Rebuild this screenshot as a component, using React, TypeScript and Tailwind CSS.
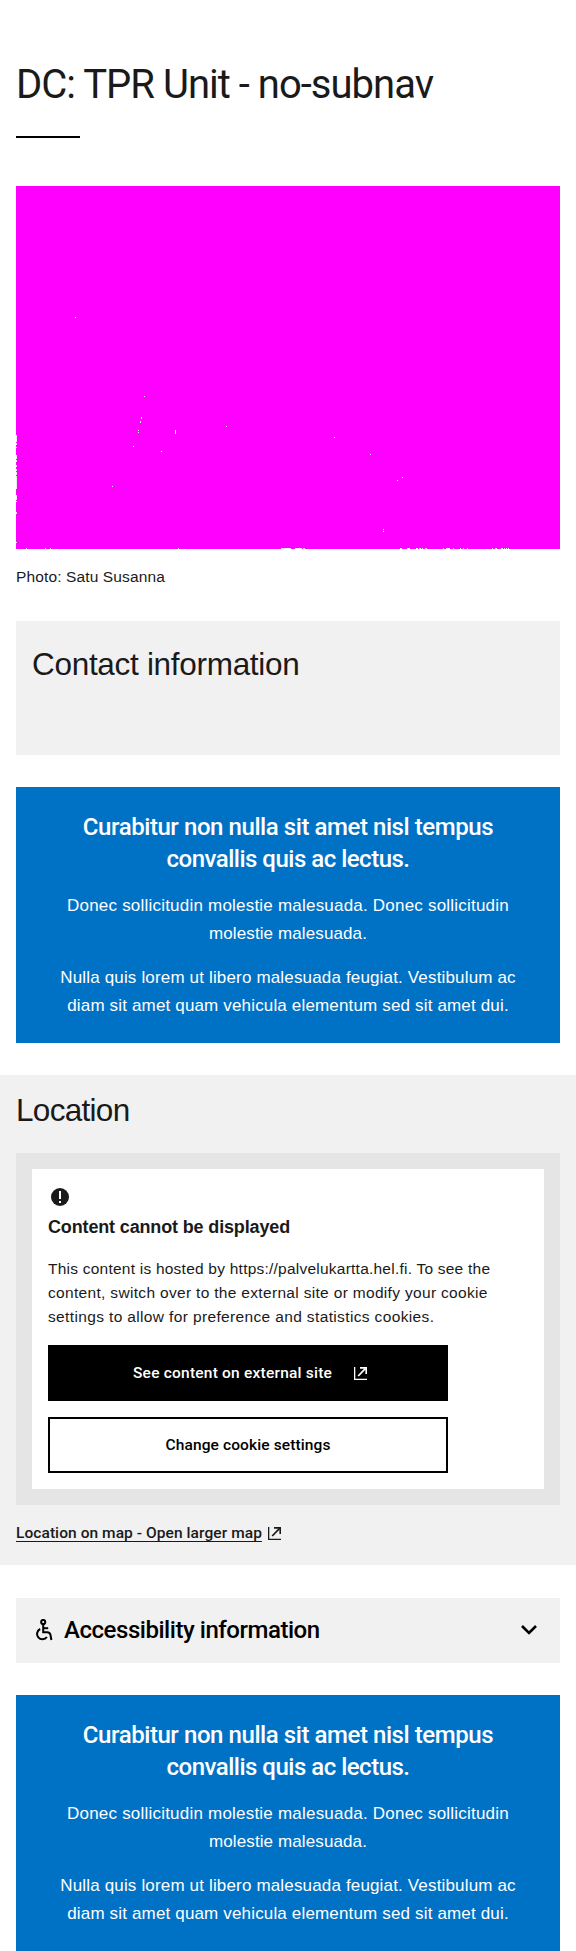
import React from "react";

const specks: [number, number, number, number][] = [
  [59, 131, 1, 1], [128, 210, 1, 1], [125, 231, 1, 2], [124, 235, 1, 2], [122, 244, 1, 1], [122, 246, 1, 1],
  [159, 244, 1, 4], [210, 240, 1, 1], [117, 260, 1, 1], [145, 265, 1, 1], [96, 300, 1, 1],
  [318, 251, 1, 1], [354, 268, 1, 1], [386, 291, 1, 1], [381, 294, 1, 1], [367, 343, 1, 1], [367, 345, 1, 1],
  [0, 249, 1, 7], [0, 257, 1, 2], [0, 261, 1, 1], [0, 269, 1, 4], [0, 274, 1, 2], [0, 279, 1, 2], [0, 283, 1, 2],
  [0, 286, 1, 3], [0, 290, 1, 13], [0, 309, 1, 5], [0, 315, 1, 1], [0, 326, 1, 2], [0, 356, 1, 1],
  [10, 362, 1, 1], [29, 362, 1, 1], [34, 362, 1, 1], [162, 362, 1, 1], [265, 362, 10, 1], [279, 362, 7, 1],
  [287, 362, 2, 1], [384, 362, 2, 1], [391, 362, 3, 1], [400, 362, 2, 1], [403, 362, 2, 1], [406, 362, 1, 1],
  [409, 362, 2, 1], [427, 362, 1, 1], [430, 362, 4, 1], [437, 362, 1, 1], [444, 362, 1, 1], [447, 362, 1, 1],
  [451, 362, 1, 1], [476, 362, 1, 1], [479, 362, 2, 1], [485, 362, 2, 1], [488, 362, 1, 1], [490, 362, 1, 1],
  [492, 362, 1, 1],
];

function Photo() {
  return (
    <svg className="mt-12 block h-[363px] w-[544px] bg-[#ff00ff]" viewBox="0 0 544 363" shapeRendering="crispEdges">
      {specks.map(([x, y, w, h]) => (
        <rect key={`${x}-${y}`} x={x} y={y} width={w} height={h} fill="#ececec" />
      ))}
    </svg>
  );
}

function ExternalIcon({ className }: { className: string }) {
  return (
    <svg className={className} viewBox="0 0 13 13" fill="none" stroke="currentColor">
      <path d="M.65 0V12.3H13" strokeWidth="1.3" />
      <path d="M4.2 9L11.6 1.4" strokeWidth="1.7" />
      <path d="M6 .9H12.2V7" strokeWidth="1.6" />
    </svg>
  );
}

function AlertIcon() {
  return (
    <svg className="h-6 w-6" viewBox="0 0 24 24">
      <circle cx="12" cy="12" r="9" fill="#1a1a1a" />
      <path d="M11 6h2v8h-2zM11 16h2v2h-2z" fill="white" />
    </svg>
  );
}

function AccessibilityIcon() {
  return (
    <svg className="h-[22px] w-[17px]" viewBox="0 0 17 22" fill="none" stroke="black" strokeWidth="2">
      <circle cx="7.2" cy="3" r="2.1" />
      <path d="M7.2 5.2V13.2H11.2Q14 13.2 14.5 16L15.4 21" />
      <path d="M7.2 9.2H12.2" />
      <path d="M4.2 10A5.4 5.4 0 1 0 10.9 18" />
    </svg>
  );
}

function Banner() {
  return (
    <section className="mx-4 mt-8 h-64 bg-[#0072c6] pt-6 text-center font-['Liberation_Sans',sans-serif] text-[17px] leading-7 whitespace-nowrap text-white">
      <h3 className="font-['Roboto',sans-serif] text-2xl leading-8 font-medium">
        <span className="block tracking-[-0.43px]">Curabitur non nulla sit amet nisl tempus</span>
        <span className="block tracking-[-0.5px]">convallis quis ac lectus.</span>
      </h3>
      <p className="mt-[17px]">
        <span className="block tracking-[0.21px]">Donec sollicitudin molestie malesuada. Donec sollicitudin</span>
        <span className="block tracking-[0.11px]">molestie malesuada.</span>
      </p>
      <p className="mt-4">
        <span className="block tracking-[0.16px]">Nulla quis lorem ut libero malesuada feugiat. Vestibulum ac</span>
        <span className="block tracking-[0.16px]">diam sit amet quam vehicula elementum sed sit amet dui.</span>
      </p>
    </section>
  );
}

export default function App() {
  return (
    <main className="w-[576px] bg-white font-['Liberation_Sans',sans-serif] text-[15.5px] text-[#1a1a1a]">
      <header className="px-4 pt-[61px]">
        <h1 className="font-['Roboto',sans-serif] text-[40px] leading-[48px] tracking-[-0.98px] whitespace-nowrap">
          DC: TPR Unit - no-subnav
        </h1>
        <div className="mt-[27px] h-0.5 w-16 bg-black" />
        <Photo />
        <p className="mt-4 leading-6 tracking-[0.13px]">Photo: Satu Susanna</p>
      </header>

      <section className="mx-4 mt-8 h-[134px] bg-[#f1f1f1] px-4 pt-[23px]">
        <h2 className="text-[31.5px] leading-10 tracking-[-0.3px]">Contact information</h2>
      </section>

      <Banner />

      <section className="mt-8 bg-[#f1f1f1] px-4 pt-[15px] pb-5">
        <h2 className="text-[31.5px] leading-10 tracking-[-0.7px]">Location</h2>
        <div className="mt-[23px] bg-[#e5e5e5] p-4">
          <div className="bg-white p-4">
            <AlertIcon />
            <h3 className="mt-1 text-lg leading-7 font-bold tracking-[-0.15px]">Content cannot be displayed</h3>
            <p className="mt-4 leading-6 whitespace-nowrap">
              <span className="block tracking-[0.23px]">This content is hosted by https://palvelukartta.hel.fi. To see the</span>
              <span className="block tracking-[0.32px]">content, switch over to the external site or modify your cookie</span>
              <span className="block tracking-[0.36px]">settings to allow for preference and statistics cookies.</span>
            </p>
            <div className="mt-4 flex w-[400px] flex-col gap-4 font-['Roboto',sans-serif] font-medium">
              <button className="flex h-14 items-center bg-black pl-[85px] text-white">
                <span className="w-[200px] pt-0.5 text-left tracking-[0.22px] whitespace-nowrap">See content on external site</span>
                <ExternalIcon className="ml-[21px] h-[13px] w-[13px]" />
              </button>
              <button className="h-14 border-2 border-black pt-0.5 tracking-[0.12px] text-black">Change cookie settings</button>
            </div>
          </div>
        </div>
        <a className="mt-4 flex h-6 items-center font-['Roboto',sans-serif] leading-6 font-medium">
          <span className="w-[246px] tracking-[0.07px] whitespace-nowrap underline decoration-1 underline-offset-[3px]">
            Location on map - Open larger map
          </span>
          <ExternalIcon className="ml-1.5 h-[13px] w-[13px]" />
        </a>
      </section>

      <section className="mx-4 mt-[33px] flex h-[65px] items-center bg-[#f1f1f1] pr-[23px] pb-px pl-5 text-black">
        <AccessibilityIcon />
        <h2 className="-mt-px ml-[11px] flex-1 font-['Roboto',sans-serif] text-2xl leading-8 font-medium tracking-[-0.46px]">
          Accessibility information
        </h2>
        <svg className="h-[10px] w-4" viewBox="0 0 16 10" fill="none" stroke="currentColor" strokeWidth="2.6">
          <path d="M1 1L8 8L15 1" />
        </svg>
      </section>

      <Banner />
    </main>
  );
}
